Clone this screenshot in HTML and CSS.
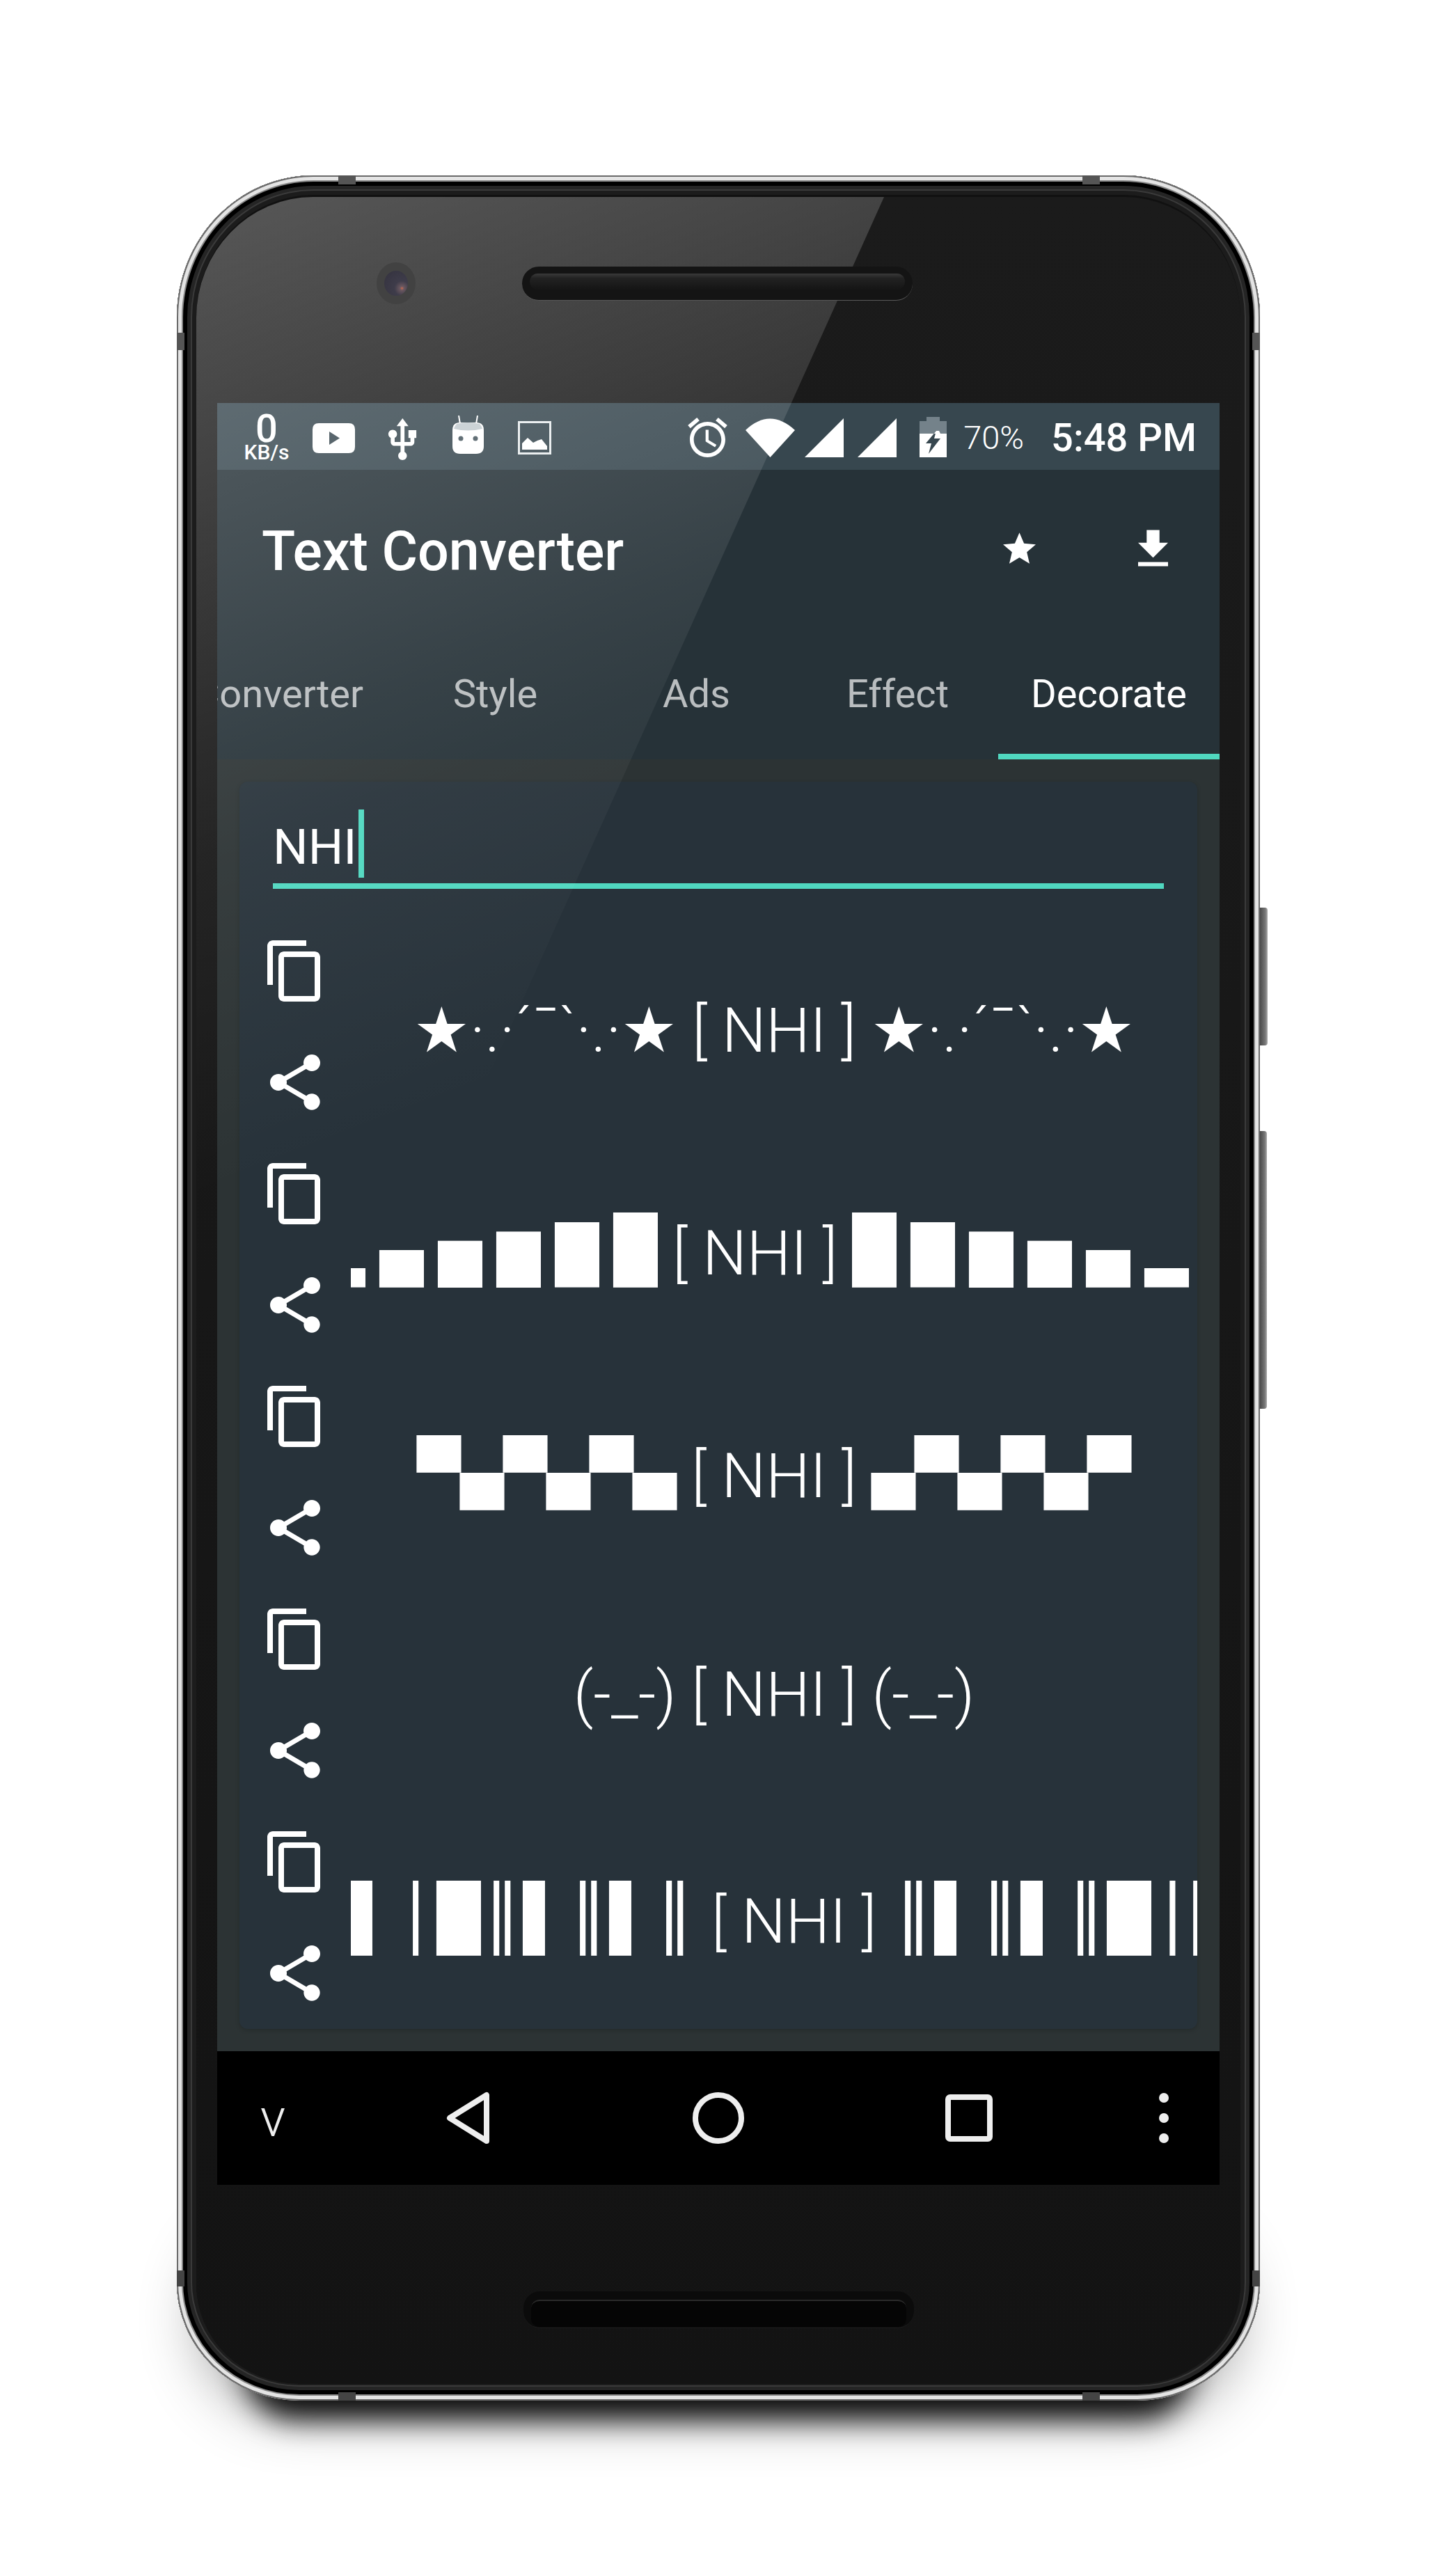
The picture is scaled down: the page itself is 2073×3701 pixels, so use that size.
FILE: index.html
```html
<!DOCTYPE html>
<html>
<head>
<meta name="viewport" content="width=device-width, initial-scale=1">
<title>Text Converter</title>
<link rel="stylesheet" href="styles.css">
</head>
<body>

<div class="phone">
  <div class="phone-shadow"></div>
  <div class="band band-top-l"></div>
  <div class="band band-top-r"></div>
  <div class="band band-left-t"></div>
  <div class="band band-right-t"></div>
  <div class="band band-left-b"></div>
  <div class="band band-right-b"></div>
  <div class="band band-bot-l"></div>
  <div class="band band-bot-r"></div>
  <div class="side-btn power"></div>
  <div class="side-btn volume"></div>

  <div class="glass">
    <div class="glare"></div>

    <div class="bezel-top">
      <div class="camera"><div class="lens"></div></div>
      <div class="speaker"><div class="slot"></div></div>
    </div>

    <div class="screen">

      <div class="status-bar">
        <div class="speed"><span class="speed-num">0</span><span class="speed-unit">KB/s</span></div>
        <svg class="ic-yt" viewBox="0 0 61 43"><path fill-rule="evenodd" d="M9 0H52Q61 0 61 9V34Q61 43 52 43H9Q0 43 0 34V9Q0 0 9 0ZM24 12V31L39 21.500Z"/></svg>
        <svg class="ic-usb" viewBox="4.800 1 14.200 21.200"><path d="M15 7v4h1v2h-3V5h2l-3-4-3 4h2v8H8v-2.070c.7-.37 1.200-1.080 1.200-1.930 0-1.210-.99-2.200-2.200-2.200-1.210 0-2.200.99-2.200 2.200 0 .85.5 1.560 1.200 1.930V13c0 1.110.89 2 2 2h3v3.050c-.71.37-1.200 1.100-1.200 1.950 0 1.220.99 2.200 2.200 2.200 1.210 0 2.200-.98 2.200-2.200 0-.85-.49-1.580-1.200-1.950V15h3c1.110 0 2-.89 2-2v-2h1V7h-4z"/></svg>
        <svg class="ic-bot" viewBox="0 0 45 55">
          <path class="thin" d="M9 0L11 12M36 0L34 12"/>
          <path d="M11 10H34Q45 10 45 21V44Q45 55 34 55H11Q0 55 0 44V21Q0 10 11 10Z"/>
          <path class="bot-cap" d="M6 12Q22 8 39 12Q42 15 43 19Q22 24 2 19Q3 15 6 12Z"/>
          <circle class="bot-eye" cx="12" cy="33" r="3.500"/>
          <circle class="bot-eye" cx="33" cy="33" r="3.500"/>
        </svg>
        <svg class="ic-img" viewBox="0 0 48 48">
          <rect class="img-frame" x="1.500" y="1.500" width="45" height="45"/>
          <path d="M6 41V32L14 24L22 31L28 28L34 26L42 36V41Z"/>
        </svg>

        <div class="status-right">
          <svg class="ic-alarm" viewBox="2 1.860 20 20.140"><path d="M22 5.720l-4.600-3.860-1.290 1.530 4.600 3.860L22 5.720zM7.880 3.390L6.600 1.860 2 5.710l1.290 1.530 4.590-3.850zM12.500 8H11v6l4.750 2.850.75-1.230-4-2.370V8zM12 4c-4.970 0-9 4.030-9 9s4.030 9 9 9 9-4.030 9-9-4.030-9-9-9zm0 16c-3.870 0-7-3.130-7-7s3.130-7 7-7 7 3.130 7 7-3.130 7-7 7z"/></svg>
          <svg class="ic-wifi" viewBox="0 0 71 56"><path d="M0 17Q35 -16 71 17L35.500 56Z"/></svg>
          <svg class="ic-signal" viewBox="0 0 56 56"><path d="M56 0V56H0Z"/></svg>
          <svg class="ic-signal second" viewBox="0 0 56 56"><path d="M56 0V56H0Z"/></svg>
          <svg class="ic-batt" viewBox="0 0 39 58">
            <path class="batt-top" d="M10 0H29V6H39V24H0V6H10Z"/>
            <path d="M0 24H39V58H0Z"/>
            <path d="M24 20L9 38H17L13 53L30 31H21Z" class="bolt-low"/>
            <path d="M24 20L20.700 24H30L28 20Z" class="bolt-none"/>
          </svg>
          <span class="batt-pct">70%</span>
          <span class="clock">5:48 PM</span>
        </div>
      </div>

      <div class="toolbar">
        <span class="app-title">Text Converter</span>
        <div class="action"><svg class="ic-star" viewBox="2 2 20 19"><path d="M12 17.270L18.180 21l-1.640-7.030L22 9.240l-7.190-.61L12 2 9.190 8.630 2 9.240l5.460 4.730L5.820 21z"/></svg></div>
        <div class="action"><svg class="ic-down" viewBox="5 3 14 17"><path d="M19 9h-4V3H9v6H5l7 7 7-7zM5 18v2h14v-2H5z"/></svg></div>
      </div>

      <div class="tabs">
        <div class="tab tab-first">Converter</div>
        <div class="tab">Style</div>
        <div class="tab">Ads</div>
        <div class="tab">Effect</div>
        <div class="tab active">Decorate</div>
      </div>

      <div class="content">
        <div class="card">
          <div class="input">
            <span class="input-text">NHI</span>
            <span class="cursor"></span>
          </div>
          <div class="input-line"></div>

          <div class="row">
            <div class="row-actions">
              <svg class="ic-copy" viewBox="0 0 24 24"><path d="M16 1H4c-1.100 0-2 .9-2 2v14h2V3h12V1zm3 4H8c-1.100 0-2 .9-2 2v14c0 1.100.9 2 2 2h11c1.100 0 2-.9 2-2V7c0-1.100-.9-2-2-2zm0 16H8V7h11v14z"/></svg>
              <svg class="ic-share" viewBox="0 0 24 24"><path d="M18 16.080c-.76 0-1.440.3-1.960.77L8.910 12.700c.05-.23.09-.46.09-.7s-.04-.47-.09-.7l7.050-4.110c.54.5 1.250.81 2.040.81 1.660 0 3-1.340 3-3s-1.340-3-3-3-3 1.340-3 3c0 .24.04.47.09.7L8.040 9.810C7.500 9.310 6.790 9 6 9c-1.660 0-3 1.340-3 3s1.340 3 3 3c.79 0 1.500-.31 2.040-.81l7.120 4.160c-.05.21-.08.43-.08.65 0 1.610 1.310 2.920 2.920 2.920 1.610 0 2.920-1.310 2.920-2.920s-1.310-2.920-2.920-2.920z"/></svg>
            </div>
            <div class="deco deco-stars">★·.·´¯`·.·★ [ NHI ] ★·.·´¯`·.·★</div>
          </div>

          <div class="row">
            <div class="row-actions">
              <svg class="ic-copy" viewBox="0 0 24 24"><path d="M16 1H4c-1.100 0-2 .9-2 2v14h2V3h12V1zm3 4H8c-1.100 0-2 .9-2 2v14c0 1.100.9 2 2 2h11c1.100 0 2-.9 2-2V7c0-1.100-.9-2-2-2zm0 16H8V7h11v14z"/></svg>
              <svg class="ic-share" viewBox="0 0 24 24"><path d="M18 16.080c-.76 0-1.440.3-1.960.77L8.910 12.700c.05-.23.09-.46.09-.7s-.04-.47-.09-.7l7.050-4.110c.54.5 1.250.81 2.040.81 1.660 0 3-1.340 3-3s-1.340-3-3-3-3 1.340-3 3c0 .24.04.47.09.7L8.040 9.810C7.500 9.310 6.790 9 6 9c-1.660 0-3 1.340-3 3s1.340 3 3 3c.79 0 1.500-.31 2.040-.81l7.120 4.160c-.05.21-.08.43-.08.65 0 1.610 1.310 2.920 2.920 2.920 1.610 0 2.920-1.310 2.920-2.920s-1.310-2.920-2.920-2.920z"/></svg>
            </div>
            <div class="deco deco-bars"><span class="blocks gap">▂▄▅▆▇█</span> [ NHI ] <span class="blocks gap">█▇▆▅▄▂</span></div>
          </div>

          <div class="row">
            <div class="row-actions">
              <svg class="ic-copy" viewBox="0 0 24 24"><path d="M16 1H4c-1.100 0-2 .9-2 2v14h2V3h12V1zm3 4H8c-1.100 0-2 .9-2 2v14c0 1.100.9 2 2 2h11c1.100 0 2-.9 2-2V7c0-1.100-.9-2-2-2zm0 16H8V7h11v14z"/></svg>
              <svg class="ic-share" viewBox="0 0 24 24"><path d="M18 16.080c-.76 0-1.440.3-1.960.77L8.910 12.700c.05-.23.09-.46.09-.7s-.04-.47-.09-.7l7.050-4.110c.54.5 1.250.81 2.040.81 1.660 0 3-1.340 3-3s-1.340-3-3-3-3 1.340-3 3c0 .24.04.47.09.7L8.040 9.810C7.500 9.310 6.790 9 6 9c-1.660 0-3 1.340-3 3s1.340 3 3 3c.79 0 1.500-.31 2.040-.81l7.120 4.160c-.05.21-.08.43-.08.65 0 1.610 1.310 2.920 2.920 2.920 1.610 0 2.920-1.310 2.920-2.920s-1.310-2.920-2.920-2.920z"/></svg>
            </div>
            <div class="deco"><span class="blocks">▀▄▀▄▀▄</span> [ NHI ] <span class="blocks">▄▀▄▀▄▀</span></div>
          </div>

          <div class="row">
            <div class="row-actions">
              <svg class="ic-copy" viewBox="0 0 24 24"><path d="M16 1H4c-1.100 0-2 .9-2 2v14h2V3h12V1zm3 4H8c-1.100 0-2 .9-2 2v14c0 1.100.9 2 2 2h11c1.100 0 2-.9 2-2V7c0-1.100-.9-2-2-2zm0 16H8V7h11v14z"/></svg>
              <svg class="ic-share" viewBox="0 0 24 24"><path d="M18 16.080c-.76 0-1.440.3-1.960.77L8.910 12.700c.05-.23.09-.46.09-.7s-.04-.47-.09-.7l7.050-4.110c.54.5 1.250.81 2.040.81 1.660 0 3-1.340 3-3s-1.340-3-3-3-3 1.340-3 3c0 .24.04.47.09.7L8.040 9.810C7.500 9.310 6.790 9 6 9c-1.660 0-3 1.340-3 3s1.340 3 3 3c.79 0 1.500-.31 2.040-.81l7.120 4.160c-.05.21-.08.43-.08.65 0 1.610 1.310 2.920 2.920 2.920 1.610 0 2.920-1.310 2.920-2.920s-1.310-2.920-2.920-2.920z"/></svg>
            </div>
            <div class="deco">(-_-) [ NHI ] (-_-)</div>
          </div>

          <div class="row">
            <div class="row-actions">
              <svg class="ic-copy" viewBox="0 0 24 24"><path d="M16 1H4c-1.100 0-2 .9-2 2v14h2V3h12V1zm3 4H8c-1.100 0-2 .9-2 2v14c0 1.100.9 2 2 2h11c1.100 0 2-.9 2-2V7c0-1.100-.9-2-2-2zm0 16H8V7h11v14z"/></svg>
              <svg class="ic-share" viewBox="0 0 24 24"><path d="M18 16.080c-.76 0-1.440.3-1.960.77L8.910 12.700c.05-.23.09-.46.09-.7s-.04-.47-.09-.7l7.050-4.110c.54.5 1.250.81 2.040.81 1.660 0 3-1.340 3-3s-1.340-3-3-3-3 1.340-3 3c0 .24.04.47.09.7L8.040 9.810C7.500 9.310 6.790 9 6 9c-1.660 0-3 1.340-3 3s1.340 3 3 3c.79 0 1.500-.31 2.040-.81l7.120 4.160c-.05.21-.08.43-.08.65 0 1.610 1.310 2.920 2.920 2.920 1.610 0 2.920-1.310 2.920-2.920s-1.310-2.920-2.920-2.920z"/></svg>
            </div>
            <div class="deco"><span class="blocks">▌│█║▌║▌║</span> [ NHI ] <span class="blocks">║▌║▌║█│▌</span></div>
          </div>
        </div>
      </div>

      <div class="nav-bar">
        <span class="nav-v">v</span>
        <svg class="nav-back" viewBox="0 0 62 76"><path d="M58 5V71L5 38Z"/></svg>
        <svg class="nav-home" viewBox="0 0 76 76"><circle cx="38" cy="38" r="33"/></svg>
        <svg class="nav-recent" viewBox="0 0 68 68"><rect x="4" y="4" width="60" height="60" rx="3"/></svg>
        <div class="nav-dots"><i></i><i></i><i></i></div>
      </div>

    </div>

    <div class="bezel-bottom">
      <div class="speaker speaker-low"><div class="slot"></div></div>
    </div>
  </div>
</div>

</body>
</html>
```

FILE: styles.css
```css
html {
  background: #fff;
}

body {
  margin: 0;
  width: 2073px;
  height: 3701px;
  overflow: hidden;
  padding-top: 252px;
  box-sizing: border-box;
  font-family: Roboto, "Liberation Sans", sans-serif;
  color: #fff;
}

svg {
  display: block;
  fill: currentColor;
  flex: none;
}

/* Phone body */
.phone {
  position: relative;
  width: 1556px;
  height: 3197px;
  margin-left: 254px;
  padding: 31px 28px 24px;
  box-sizing: border-box;
  background: #111;
  border-radius: 196px 196px 176px 176px / 204px 204px 170px 170px;
  box-shadow:
    inset 0 0 0 2px #6a6a6a,
    inset 0 0 0 7px #e4e4e4,
    inset 0 0 0 9px #888,
    inset 0 0 0 15px #000,
    inset 0 0 0 20px #252525,
    inset 0 0 0 22px #3a3a3a,
    inset 0 0 0 28px #1c1c1c;
}

.phone-shadow {
  position: absolute;
  z-index: -1;
  left: 40px;
  right: 40px;
  bottom: 10px;
  height: 260px;
  background: #000;
  border-radius: 160px;
  box-shadow: 0 96px 40px -60px rgba(0,0,0,0.95), 0 20px 90px rgba(0,0,0,0.45);
}

.band {
  position: absolute;
  background: #555;
}

.band-top-l, .band-top-r { top: 0; width: 25px; height: 13px; }
.band-bot-l, .band-bot-r { bottom: 0; width: 25px; height: 12px; background: #444; }
.band-left-t, .band-right-t { top: 226px; width: 11px; height: 25px; }
.band-left-b, .band-right-b { bottom: 164px; width: 11px; height: 23px; background: #444; }
.band-top-l, .band-bot-l { left: 232px; }
.band-top-r, .band-bot-r { right: 230px; }
.band-left-t, .band-left-b { left: 0; }
.band-right-t, .band-right-b { right: 0; }

.side-btn {
  position: absolute;
  left: 100%;
  width: 11px;
  background: linear-gradient(to right, #4a4a4a, #777 70%, #aaa);
  border-radius: 0 4px 4px 0;
}

.power { top: 1052px; height: 198px; }
.volume { top: 1373px; height: 399px; width: 10px; }

/* Glass front */
.glass {
  position: relative;
  height: 100%;
  overflow: hidden;
  background: linear-gradient(to bottom, #1b1b1b, #131313);
  border-radius: 168px 168px 148px 148px / 174px 174px 142px 142px;
}

/* Reflection across the top of the glass */
.glare {
  position: absolute;
  z-index: 2;
  top: 0;
  left: 0;
  width: 1500px;
  height: 1500px;
  pointer-events: none;
  background: linear-gradient(159deg,
    rgba(255,255,255,0.265),
    rgba(255,255,255,0.08) 758px,
    rgba(255,255,255,0.05) 900px,
    rgba(255,255,255,0) 1350px);
  clip-path: polygon(0 0, 988px 0, 313px 1500px, 0 1500px);
}

.bezel-top {
  position: relative;
  z-index: 3;
  height: 296px;
  padding: 0 0 48px 259px;
  box-sizing: border-box;
  display: flex;
  align-items: center;
  gap: 153px;
}

.camera {
  width: 56px;
  height: 60px;
  border-radius: 50%;
  background: #424242;
  display: flex;
  align-items: center;
  justify-content: center;
}

.lens {
  width: 34px;
  height: 36px;
  border-radius: 50%;
  background: radial-gradient(circle at 75% 70%, #c86a50 0, #6a5860 8%, #3e3c4a 30%, #34323e 100%);
}

.speaker {
  width: 561px;
  height: 49px;
  padding: 10px 11px 15px;
  box-sizing: border-box;
  background: #141414;
  border-radius: 24px;
  border-bottom: 1px solid #5a5a5a;
}

.slot {
  height: 100%;
  background: linear-gradient(to bottom, #3a3a3a, #222 30%, #151515);
  border-radius: 12px;
}

.screen {
  position: relative;
  width: 1440px;
  height: 2560px;
  margin-left: 30px;
  background: #263238;
  display: flex;
  flex-direction: column;
}

/* Status bar */
.status-bar {
  height: 96px;
  padding-left: 38px;
  background: #37474f;
  display: flex;
  align-items: center;
}

.speed {
  width: 66px;
  display: flex;
  flex-direction: column;
  align-items: center;
  margin-top: 1px;
}

.speed-num {
  font-size: 56px;
  line-height: 44px;
  font-weight: 500;
}

.speed-unit {
  font-size: 30px;
  line-height: 24px;
  font-weight: 500;
}

.ic-yt { width: 61px; height: 43px; margin-left: 33px; margin-top: 5px; }
.ic-usb { width: 42px; height: 60px; margin-left: 47px; margin-top: 7px; }
.ic-bot { width: 45px; height: 55px; margin-left: 51px; margin-top: -6px; }
.ic-img { width: 48px; height: 48px; margin-left: 49px; margin-top: 4px; }

.thin { fill: none; stroke: #fff; stroke-width: 2; }
.bot-cap { fill: #c3cbcf; }
.bot-eye { fill: #46565e; }
.img-frame { fill: none; stroke: #e8ecee; stroke-width: 3; }

.status-right {
  margin-left: auto;
  padding-right: 33px;
  display: flex;
  align-items: center;
}

.ic-alarm { width: 57px; height: 57px; margin-top: 3px; }
.ic-wifi { width: 71px; height: 56px; margin-left: 26px; margin-top: 3px; }
.ic-signal { width: 56px; height: 56px; margin-left: 14px; margin-top: 3px; }
.ic-signal.second { margin-left: 20px; }
.ic-batt { width: 39px; height: 58px; margin-left: 33px; margin-top: 2px; }
.batt-top { fill: #74828a; }
.bolt-low { fill: #37474f; }
.bolt-none { fill: #fff; }

.batt-pct {
  margin-left: 24px;
  padding-top: 3px;
  font-size: 47px;
  font-weight: 300;
}

.clock {
  margin-left: 39px;
  padding-top: 3px;
  font-size: 56px;
  font-weight: 500;
}

/* Toolbar */
.toolbar {
  height: 224px;
  padding-left: 64px;
  display: flex;
  align-items: center;
}

.app-title {
  margin-right: auto;
  padding-top: 10px;
  font-size: 79px;
  line-height: 80px;
  font-weight: 500;
}

.action {
  width: 192px;
  height: 192px;
  display: flex;
  align-items: center;
  justify-content: center;
}

.ic-star { width: 47px; height: 45px; }
.ic-down { width: 43px; height: 53px; }

/* Tabs */
.tabs {
  height: 192px;
  display: flex;
  justify-content: flex-end;
  overflow: hidden;
}

.tab {
  flex: none;
  width: 289px;
  box-sizing: border-box;
  padding-top: 4px;
  text-align: center;
  font-size: 56px;
  line-height: 188px;
  color: rgba(255,255,255,0.68);
}

.tab-first {
  width: auto;
  padding-left: 45px;
  padding-right: 45px;
}

.tab.active {
  width: 318px;
  color: #fff;
  border-bottom: 8px solid #50d8c0;
}

/* Decorate page */
.content {
  flex: 1;
  padding: 32px;
  background: #2c3334;
}

.card {
  height: 100%;
  padding-top: 40px;
  box-sizing: border-box;
  background: #27323a;
  border-radius: 12px;
  box-shadow: 0 2px 6px rgba(0,0,0,0.18);
}

.input {
  height: 98px;
  margin: 0 48px;
  display: flex;
  align-items: center;
}

.input-text {
  padding-top: 9px;
  font-size: 71px;
  line-height: 72px;
}

.cursor {
  width: 8px;
  height: 98px;
  margin-left: 2px;
  background: #50d8c0;
}

.input-line {
  height: 8px;
  margin: 8px 48px 38px;
  background: #50d8c0;
}

.row {
  height: 320px;
  display: flex;
}

.row-actions {
  flex: none;
  width: 160px;
  display: flex;
  flex-direction: column;
  align-items: center;
  justify-content: space-around;
}

.ic-copy, .ic-share {
  width: 96px;
  height: 96px;
}

.deco {
  flex: 1;
  min-width: 0;
  overflow: hidden;
  white-space: nowrap;
  text-align: center;
  font-size: 89.500px;
  line-height: 320px;
  font-weight: 300;
}

.deco-stars {
  padding-top: 6px;
  letter-spacing: -0.300px;
}

.deco-bars {
  text-align: left;
  text-indent: -42px;
}

.blocks {
  display: inline-block;
  text-indent: 0;
  transform: scaleY(0.88);
  font-family: "DejaVu Sans Mono", monospace;
  font-size: 103px;
  font-weight: 400;
}

.blocks.gap {
  letter-spacing: 22px;
  margin-right: -22px;
}

/* Navigation bar */
.nav-bar {
  height: 192px;
  background: #000;
  display: grid;
  grid-template-columns: 160px 400px 320px 400px 160px;
  align-items: center;
  justify-items: center;
  color: #eee;
}

.nav-v {
  font-size: 76px;
  line-height: 76px;
  font-weight: 300;
}

.nav-back, .nav-home, .nav-recent {
  fill: none;
  stroke: #eee;
  stroke-width: 8;
  stroke-linejoin: round;
}

.nav-back { width: 62px; height: 76px; }
.nav-home { width: 76px; height: 76px; }
.nav-recent { width: 68px; height: 68px; }

.nav-dots {
  display: flex;
  flex-direction: column;
  gap: 15px;
}

.nav-dots i {
  display: block;
  width: 14px;
  height: 14px;
  border-radius: 50%;
  background: #eee;
}

.bezel-bottom {
  height: 286px;
  padding-top: 72px;
  box-sizing: border-box;
  display: flex;
  align-items: center;
  justify-content: center;
}

.speaker-low {
  height: 53px;
  padding: 12px 11px 3px;
  background: #0b0b0b;
  border-bottom-color: #1d1d1d;
}

.speaker-low .slot {
  background: #050505;
  border-top: 2px solid #2a2a2a;
}
```
